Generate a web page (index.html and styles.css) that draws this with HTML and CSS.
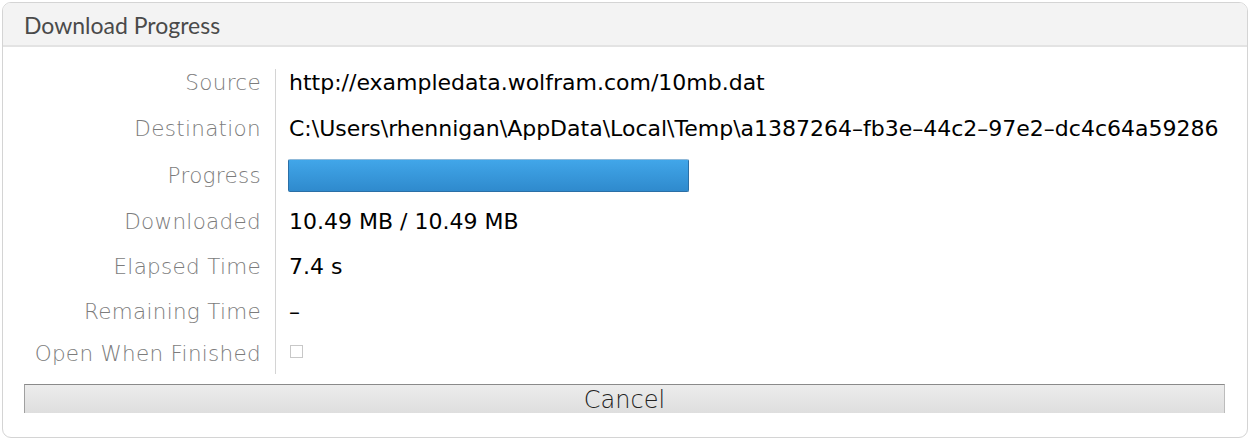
FILE: index.html
```html
<!DOCTYPE html>
<html>
<head>
<meta charset="utf-8">
<link rel="stylesheet" href="styles.css">
</head>
<body>
<div class="panel">
  <div class="header">Download Progress</div>
  <div class="content">
    <div class="grid">
      <div class="divider"></div>
      <div class="label r1">Source</div>
      <div class="value r1">http://exampledata.wolfram.com/10mb.dat</div>
      <div class="label r2">Destination</div>
      <div class="value r2">C:\Users\rhennigan\AppData\Local\Temp\a1387264–fb3e–44c2–97e2–dc4c64a59286</div>
      <div class="label r3">Progress</div>
      <div class="value r3"><div class="bar"><div class="fill" style="width:100%"></div></div></div>
      <div class="label r4">Downloaded</div>
      <div class="value r4">10.49 MB / 10.49 MB</div>
      <div class="label r5">Elapsed Time</div>
      <div class="value r5">7.4 s</div>
      <div class="label r6">Remaining Time</div>
      <div class="value r6">–</div>
      <div class="label r7">Open When Finished</div>
      <div class="value r7"><span class="checkbox"></span></div>
    </div>
    <div class="button">Cancel</div>
  </div>
</div>
</body>
</html>
```
FILE: styles.css
```css
html, body {
  margin: 0;
  padding: 0;
  background: #ffffff;
}
body {
  padding: 2px;
  font-family: "DejaVu Sans", sans-serif;
}
.panel {
  width: 1246px;
  height: 436px;
  box-sizing: border-box;
  border: 1px solid #d4d4d4;
  border-radius: 9px;
  overflow: hidden;
  display: flex;
  flex-direction: column;
}
.header {
  height: 44px;
  box-sizing: border-box;
  background: #f3f3f3;
  border-bottom: 2px solid #e3e3e3;
  padding-left: 21px;
  font-family: "Lato", sans-serif;
  font-size: 23px;
  color: #4a4a4a;
  display: flex;
  align-items: center;
  padding-top: 1px;
}
.content {
  flex: 1;
  padding: 12px 22px 0 21px;
  display: flex;
  flex-direction: column;
}
.grid {
  display: grid;
  grid-template-columns: 237px 14px 1px 13px 1fr;
  grid-template-rows: 46px 46px 48px 45px 45px 45px 38px;
}
.divider {
  grid-column: 3;
  grid-row: 1 / -1;
  background: #d4d4d4;
  margin-top: 10px;
  margin-bottom: -2px;
}
.label {
  grid-column: 1;
  text-align: right;
  font-weight: 200;
  font-size: 21.5px;
  color: #7c7c7c;
  display: flex;
  align-items: center;
  justify-content: flex-end;
  letter-spacing: 0.3px;
}
.value {
  grid-column: 5;
  font-size: 22px;
  color: #000000;
  display: flex;
  align-items: center;
  white-space: nowrap;
}
.r1 { grid-row: 1; }
.r2 { grid-row: 2; }
.r3 { grid-row: 3; }
.r4 { grid-row: 4; }
.r5 { grid-row: 5; }
.r6 { grid-row: 6; }
.r7 { grid-row: 7; }
.bar {
  width: 401px;
  height: 33px;
  margin-left: -1px;
  box-sizing: border-box;
}
.fill {
  height: 100%;
  box-sizing: border-box;
  border: 1px solid #2b6fa6;
  border-top-color: #8fb9d9;
  border-radius: 2px;
  background: linear-gradient(#41a6e9, #2f8acd);
}
.checkbox {
  display: inline-block;
  width: 11px;
  height: 11px;
  margin-left: 1px;
  border: 1px solid #c8c8c8;
  margin-top: -4px;
}
.button {
  margin-top: 12px;
  height: 29px;
  box-sizing: border-box;
  border-top: 1px solid #8a8a8a;
  border-left: 1px solid #a0a0a0;
  border-right: 1px solid #bcbcbc;
  background: linear-gradient(#ececec, #dedede);
  display: flex;
  align-items: center;
  justify-content: center;
  font-weight: 200;
  font-size: 24px;
  color: #222222;
  width: 1201px;
  padding-top: 2px;
}
```
